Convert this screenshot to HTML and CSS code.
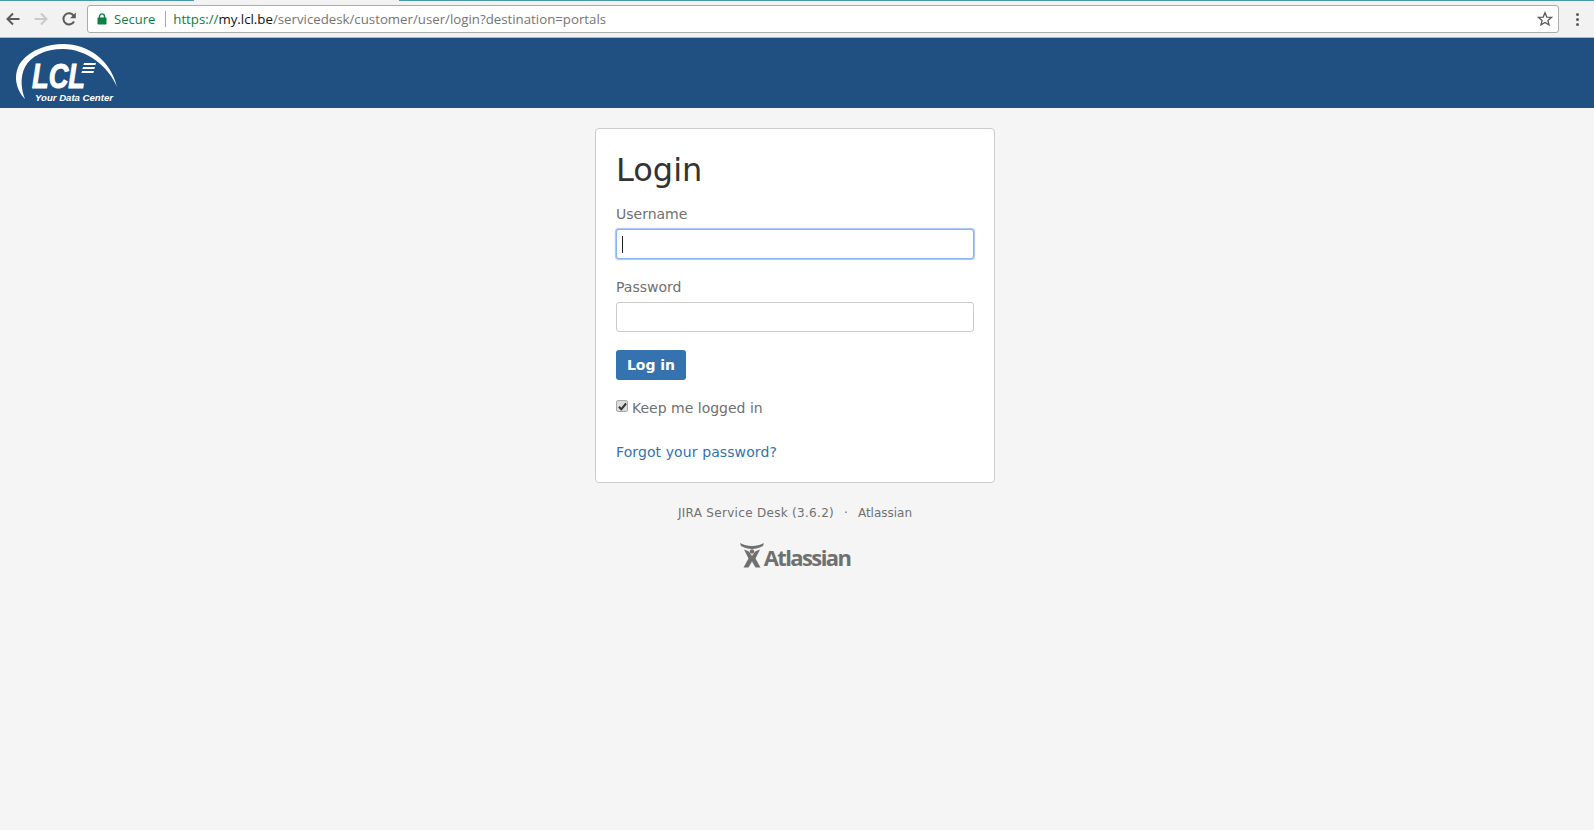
FILE: index.html
```html
<!DOCTYPE html>
<html>
<head>
    <title>Login</title>
    <link rel="stylesheet" href="styles.css">
</head>
<body>
    <!-- Browser toolbar -->
    <div class="toolbar">
        <div class="tab-strip">
            <span class="tab-line tab-line-left"></span>
            <span class="tab-line tab-line-right"></span>
        </div>
        <div class="toolbar-row">
            <svg class="nav-icon" width="16" height="16" viewBox="0 0 16 16"><path d="M14.5 8H2.5M8 2.5L2.5 8L8 13.5" fill="none" stroke="#5a5a5a" stroke-width="2"/></svg>
            <svg class="nav-icon nav-forward" width="16" height="16" viewBox="0 0 16 16"><path d="M1.5 8H13.5M8 2.5L13.5 8L8 13.5" fill="none" stroke="#c9c9c9" stroke-width="2"/></svg>
            <svg class="nav-icon nav-reload" width="16" height="16" viewBox="0 0 16 16"><path d="M13 10.5A5.6 5.6 0 1 1 12.6 4.6" fill="none" stroke="#5a5a5a" stroke-width="2"/><path d="M14.8 1.5V7.2H9.1Z" fill="#5a5a5a"/></svg>
            <div class="address">
                <svg class="lock" width="10" height="12" viewBox="0 0 10 12"><path d="M2.5 5V3.4a2.5 2.5 0 0 1 5 0V5" fill="none" stroke="#0b8043" stroke-width="1.4"/><rect x="0.5" y="4.6" width="9" height="7" rx="0.8" fill="#0b8043"/></svg>
                <span class="secure">Secure</span>
                <span class="address-sep"></span>
                <span class="url"><span class="url-scheme">https://</span><span class="url-host">my.lcl.be</span>/servicedesk/customer/user/login?destination=portals</span>
                <svg class="star" width="16" height="16" viewBox="0 0 16 16"><path d="M8 1.8L9.8 6.1L14.4 6.4L10.9 9.4L12 13.9L8 11.4L4 13.9L5.1 9.4L1.6 6.4L6.2 6.1Z" fill="none" stroke="#5a5a5a" stroke-width="1.3"/></svg>
            </div>
            <div class="menu-dots"><span></span><span></span><span></span></div>
        </div>
    </div>

    <div class="site-header">
        <svg class="logo" width="106" height="66" viewBox="0 0 106 66">
            <path d="M12 56C2 46 0 30 8 19C18 6 36 1 50 1C76 1 98 18 104 44C96 24 74 6 50 6C32 6 18 13 12 24C7 34 8 46 12 56Z" fill="#fff"/>
            <text class="logo-lcl" x="19" y="45" textLength="53" lengthAdjust="spacingAndGlyphs">LCL</text>
            <path d="M71 20H83L82.4 22H70.4ZM70 24H82L81.4 26H69.4ZM69 28H81L80.4 30H68.4Z" fill="#fff"/>
            <text class="logo-tag" x="22" y="58" textLength="78" lengthAdjust="spacingAndGlyphs">Your Data Center</text>
        </svg>
    </div>

    <div class="main">
        <div class="card">
            <h1>Login</h1>
            <label class="field-label" for="username">Username</label>
            <div class="input input-focus" id="username"><span class="caret"></span></div>
            <label class="field-label" for="password">Password</label>
            <div class="input" id="password"></div>
            <button class="login-btn">Log in</button>
            <div class="remember">
                <span class="check">
                    <svg width="9" height="9" viewBox="0 0 9 9"><path d="M1 4.8L3.3 7.3L8 1.5" fill="none" stroke="#333" stroke-width="2"/></svg>
                </span>
                <span>Keep me logged in</span>
            </div>
            <a class="forgot" href="#">Forgot your password?</a>
        </div>
        <div class="footer-links">
            <span class="product">JIRA Service Desk (3.6.2)</span>
            <span>·</span>
            <span>Atlassian</span>
        </div>
        <div class="atlassian">
            <svg width="24" height="25" viewBox="0 0 24 25">
                <path d="M0 0C7 4 17 4 24 0L23 3C16 7 8 7 1 3Z" fill="#707070"/>
                <circle cx="12" cy="8.5" r="2.2" fill="#707070"/>
                <path d="M4 6.500L9 8.500L12 13L15 8.500L20 6.500L15.500 15.500L20.500 24.500H15.500L12 18.500L8.500 24.500H3.500L8.500 15.500Z" fill="#707070"/>
            </svg>
            <span>Atlassian</span>
        </div>
    </div>
</body>
</html>
```

FILE: styles.css
```css
* {
    box-sizing: border-box;
}

html, body {
    height: 100%;
}

body {
    margin: 0;
    background-color: #f5f5f5;
    font-family: "DejaVu Sans", Verdana, sans-serif;
    font-size: 14px;
    color: #707070;
    overflow: hidden;
}

.toolbar {
    height: 38px;
    background-color: #f2f2f2;
    border-bottom: 1px solid #b5b5b5;
}

.tab-strip {
    display: flex;
    justify-content: space-between;
    height: 1px;
}

.tab-line {
    height: 1px;
    background-color: #4c97ae;
}

.tab-line-left {
    width: 194px;
}

.tab-line-right {
    width: 1195px;
}

.toolbar-row {
    display: flex;
    align-items: center;
    height: 36px;
    padding-left: 5px;
}

.nav-forward {
    margin-left: 12px;
}

.nav-reload {
    margin-left: 12px;
}

.address {
    display: flex;
    align-items: center;
    width: 1472px;
    height: 28px;
    margin-left: 10px;
    padding: 0 5px 0 9px;
    background-color: #fff;
    border: 1px solid #ababab;
    border-radius: 3px;
    font-family: "Open Sans", "Noto Sans", sans-serif;
    font-size: 13px;
}

.secure {
    margin-left: 7px;
    color: #0b8043;
}

.address-sep {
    width: 1px;
    height: 16px;
    margin: 0 7px 0 10px;
    background-color: #aaa;
}

.url {
    flex: 1;
    font-size: 13.25px;
    color: #757575;
}

.url-scheme {
    color: #0b8043;
}

.url-host {
    color: #111;
}

.menu-dots {
    display: flex;
    flex-direction: column;
    gap: 2px;
    margin-left: 17px;
}

.menu-dots span {
    width: 3px;
    height: 3px;
    background-color: #5a5a5a;
    border-radius: 50%;
}

.site-header {
    height: 70px;
    padding: 5px 0 0 13px;
    background-color: #1f5081;
}

.logo {
    display: block;
}

.logo-lcl {
    font-family: "Liberation Sans", Arial, sans-serif;
    font-size: 35px;
    font-weight: bold;
    font-style: italic;
    fill: #fff;
    stroke: #fff;
    stroke-width: 1px;
}

.logo-tag {
    font-family: "Liberation Sans", Arial, sans-serif;
    font-size: 9px;
    font-weight: bold;
    font-style: italic;
    fill: #fff;
}

.main {
    display: flex;
    flex-direction: column;
    align-items: center;
    padding: 20px 4px 0 0;
}

.card {
    width: 400px;
    height: 355px;
    padding: 20px;
    background-color: #fff;
    border: 1px solid #ccc;
    border-radius: 4px;
}

h1 {
    margin: 0 0 14px;
    padding-top: 1px;
    font-size: 32px;
    font-weight: normal;
    line-height: 40px;
    color: #333;
}

.field-label {
    display: block;
    height: 20px;
    line-height: 20px;
}

.input {
    display: flex;
    align-items: center;
    width: 358px;
    height: 30px;
    margin: 5px 0 18px;
    padding-left: 5px;
    background-color: #fff;
    border: 1px solid #ccc;
    border-radius: 3px;
}

.input-focus {
    border-color: #8cb4f0;
    box-shadow: 0 0 1px 1px rgba(140, 180, 240, 0.8);
}

.caret {
    width: 1px;
    height: 17px;
    background-color: #222;
}

.login-btn {
    display: block;
    width: 70px;
    height: 30px;
    padding: 0;
    background-color: #3572b0;
    border: none;
    border-radius: 3px;
    color: #fff;
    font-family: inherit;
    font-size: 14px;
    font-weight: bold;
}

.remember {
    display: flex;
    align-items: center;
    gap: 4px;
    height: 20px;
    margin-top: 18px;
}

.check {
    display: flex;
    align-items: center;
    justify-content: center;
    width: 12px;
    height: 12px;
    margin-top: -4px;
    background-color: #dcdcdc;
    border: 1px solid #aaa;
    border-radius: 2px;
}

.forgot {
    display: block;
    margin-top: 24px;
    line-height: 20px;
    letter-spacing: 0.1px;
    color: #3572b0;
    text-decoration: none;
}

.footer-links {
    display: flex;
    gap: 10px;
    margin-top: 20px;
    font-size: 12px;
    line-height: 20px;
}

.product {
    letter-spacing: 0.3px;
}

.atlassian {
    display: flex;
    align-items: flex-start;
    margin-top: 20px;
    color: #707070;
    font-family: "Open Sans", sans-serif;
    font-size: 22px;
    font-weight: bold;
    letter-spacing: -1.6px;
    line-height: 29px;
}
```
